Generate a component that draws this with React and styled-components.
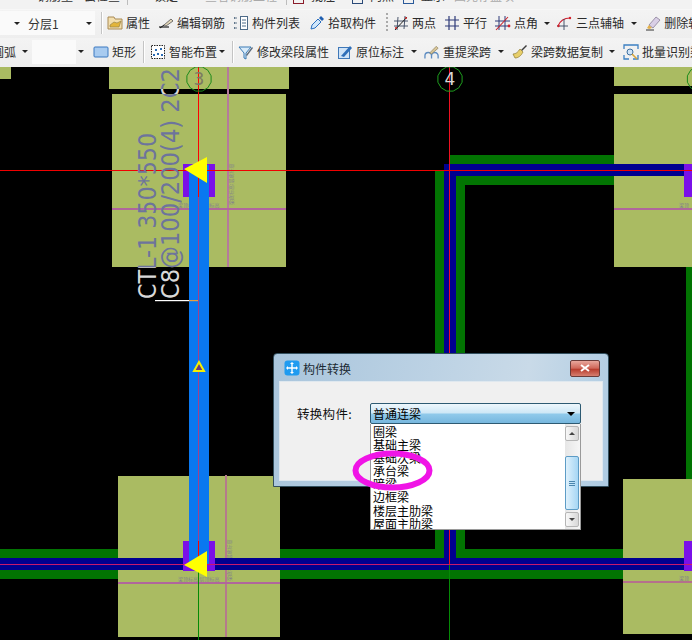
import React from 'react';
import styled, { createGlobalStyle } from 'styled-components';

const CJK = '"Noto Sans CJK SC", "Liberation Sans", sans-serif';

const Global = createGlobalStyle`
  html, body { margin: 0; padding: 0; background: #000; overflow: hidden; }
  body { font-family: ${CJK}; }
`;

const Page = styled.div`
  width: 692px;
  height: 640px;
  display: flex;
  flex-direction: column;
  overflow: hidden;
  background: #000;
`;

const Toolbars = styled.div`
  display: flex;
  flex-direction: column;
  height: 67px;
  flex: none;
  background: #f0f0f0;
`;

const CutRow = styled.div`
  height: 9px;
  display: flex;
  align-items: flex-start;
  overflow: hidden;
  background: #f2f2f2;
  border-bottom: 1px solid #f7f7f7;
`;

const CutLabel = styled.span`
  font-size: 12px;
  line-height: 12px;
  margin-top: -10px;
  margin-left: ${p => p.$ml}px;
  color: ${p => p.$c || '#333'};
  white-space: nowrap;
  flex: none;
`;

const CutIcon = styled.span`
  width: 11px;
  height: 4px;
  flex: none;
  margin-left: ${p => p.$ml}px;
  border: 1px solid ${p => p.$c};
  border-top: 0;
  box-sizing: border-box;
`;

const CutSep = styled.span`
  width: 1px;
  height: 5px;
  flex: none;
  margin-left: ${p => p.$ml}px;
  background: #bdbdbd;
`;

const Row = styled.div`
  height: ${p => p.$h}px;
  box-sizing: border-box;
  padding-bottom: 2px;
  display: flex;
  align-items: center;
  overflow: hidden;
  white-space: nowrap;
  background: linear-gradient(#f3f3f3, #eeeeee);
`;

const Combo = styled.div`
  height: 24px;
  width: ${p => p.$w}px;
  margin-left: ${p => p.$ml || 0}px;
  flex: none;
  display: flex;
  align-items: center;
  background: #fafafa;
  font-size: 12px;
  color: #333;
`;

const Caret = styled.span`
  flex: none;
  width: 0;
  height: 0;
  margin-left: ${p => p.$ml || 0}px;
  border-left: 3px solid transparent;
  border-right: 3px solid transparent;
  border-top: 3px solid #222;
`;

const ComboCaret = styled(Caret)`
  margin-left: auto;
  margin-right: 3px;
`;

const Sep = styled.span`
  flex: none;
  width: 1px;
  height: 22px;
  margin-left: ${p => p.$ml}px;
  margin-right: 1px;
  background: #c4c4c4;
  box-shadow: 1px 0 0 #fff;
`;

const DotSep = styled.span`
  flex: none;
  width: 2px;
  height: 20px;
  margin-left: ${p => p.$ml}px;
  background: repeating-linear-gradient(#aaa 0 2px, transparent 2px 4px);
`;

const Tool = styled.div`
  flex: none;
  display: flex;
  align-items: center;
  gap: 3px;
  margin-left: ${p => p.$ml}px;
  font-size: 12px;
  line-height: 16px;
  color: #2b2b2b;
`;

const PlainText = styled.span`
  flex: none;
  margin-left: ${p => p.$ml}px;
  font-size: 12px;
  color: #333;
`;

const Glyph = styled.svg`
  flex: none;
  width: 16px;
  height: 16px;
  display: block;
`;

const Canvas = styled.div`
  position: relative;
  flex: none;
  width: 692px;
  height: 573px;
  background: #000;
`;

const Drawing = styled.svg`
  display: block;
  width: 692px;
  height: 573px;
`;

const Dialog = styled.div`
  position: absolute;
  left: 273px;
  top: 286px;
  width: 336px;
  height: 134px;
  box-sizing: border-box;
  display: flex;
  flex-direction: column;
  padding: 0 6px 6px;
  border: 1px solid #33505f;
  border-radius: 4px 4px 0 0;
  background: linear-gradient(100deg, #a9c5dc 0%, #bcd2e4 45%, #c9dae8 72%, #aecbe2 100%);
`;

const TitleBar = styled.div`
  height: 28px;
  flex: none;
  display: flex;
  align-items: center;
  padding-left: 4px;
  gap: 3px;
  font-size: 12px;
  color: #1c2a33;
`;

const CloseButton = styled.div`
  width: 30px;
  height: 17px;
  margin-left: auto;
  margin-right: 2px;
  box-sizing: border-box;
  display: flex;
  align-items: center;
  justify-content: center;
  border: 1px solid #6b3c3a;
  border-radius: 2px;
  background: linear-gradient(#e8a79c 0%, #d0685a 48%, #b83d2e 55%, #d67f70 100%);
`;

const DialogBody = styled.div`
  flex: 1;
  background: #f0f0f0;
  padding: 21px 0 0 17px;
  box-shadow: 0 0 0 1px #dfe8ef;
`;

const FormRow = styled.div`
  display: flex;
  align-items: center;
`;

const FieldLabel = styled.div`
  width: 73px;
  flex: none;
  font-size: 12.5px;
  letter-spacing: 0.3px;
  color: #111;
`;

const SelectBox = styled.div`
  position: relative;
  width: 211px;
  height: 21px;
  box-sizing: border-box;
  display: flex;
  align-items: center;
  padding: 0 2px;
  border: 1px solid #2d5a72;
  border-radius: 2px;
  background: linear-gradient(#eef7fc 0%, #cfe8f6 45%, #8fc9ea 55%, #77b7de 100%);
  font-size: 12px;
  color: #000;
`;

const SelectCaret = styled(Caret)`
  margin-left: auto;
  margin-right: 3px;
  border-left-width: 4px;
  border-right-width: 4px;
  border-top-width: 4px;
  border-top-color: #000;
`;

const DropList = styled.div`
  position: absolute;
  left: -1px;
  top: 20px;
  width: 211px;
  height: 106px;
  box-sizing: border-box;
  display: flex;
  border: 1px solid #9a9a9a;
  border-top: 0;
  background: #fff;
`;

const Options = styled.div`
  flex: 1;
  overflow: hidden;
  padding: 1px 0 0 2px;
`;

const Option = styled.div`
  height: 13.1px;
  line-height: 13.1px;
  font-size: 12px;
  color: #000;
  white-space: nowrap;
`;

const ScrollBar = styled.div`
  width: 15px;
  flex: none;
  display: flex;
  flex-direction: column;
  padding: 2px 0;
  background: linear-gradient(90deg, #e6e6e6, #f6f6f6);
`;

const ScrollButton = styled.div`
  width: 14px;
  height: 15px;
  flex: none;
  box-sizing: border-box;
  display: flex;
  align-items: center;
  justify-content: center;
  border: 1px solid #b5b5b5;
  border-radius: 2px;
  background: linear-gradient(90deg, #f8f8f8, #d8d8d8);
`;

const ScrollArrow = styled.span`
  width: 0;
  height: 0;
  border-left: 3px solid transparent;
  border-right: 3px solid transparent;
  ${p => (p.$down ? 'border-top: 3px solid #444;' : 'border-bottom: 3px solid #444;')}
`;

const ScrollTrack = styled.div`
  flex: 1;
  display: flex;
  flex-direction: column;
  padding-top: 15px;
`;

const ScrollThumb = styled.div`
  width: 14px;
  height: 54px;
  box-sizing: border-box;
  display: flex;
  flex-direction: column;
  align-items: center;
  justify-content: center;
  gap: 1px;
  border: 1px solid #5d9cc6;
  border-radius: 2px;
  background: linear-gradient(90deg, #dff1fc, #a6d6f4);
`;

const Grip = styled.span`
  width: 6px;
  height: 1px;
  background: #4b86ad;
`;

const Annotation = styled.svg`
  position: absolute;
  left: 350px;
  top: 381px;
  width: 86px;
  height: 46px;
  pointer-events: none;
`;

/* ---------- toolbar icons ---------- */
const IconFolder = () => (
  <Glyph viewBox="0 0 16 16">
    <path d="M1 2h6l1 2h7v10H1z" fill="#f3dfae" stroke="#a98a55" />
    <path d="M3 10l4-3 3 1 4-2-2 6H3z" fill="#e3b53a" stroke="#8b7a4a" strokeWidth=".6" />
  </Glyph>
);
const IconRebar = () => (
  <Glyph viewBox="0 0 16 16">
    <path d="M1 12h10" stroke="#222" strokeWidth="1.2" />
    <path d="M6 10l7-6 2 2-7 5z" fill="#e3d6b8" stroke="#555" strokeWidth=".8" />
    <path d="M2 13l4-3" stroke="#111" />
  </Glyph>
);
const IconList = () => (
  <Glyph viewBox="0 0 16 16">
    <path d="M1 3h3M1 8h3M1 13h3" stroke="#35506b" strokeWidth="1.5" strokeDasharray="1.5 1" />
    <rect x="7.5" y="1.5" width="7" height="13" fill="#fff" stroke="#4d6a88" />
    <path d="M9 5h4M9 8h4M9 11h4" stroke="#4d6a88" />
  </Glyph>
);
const IconPicker = () => (
  <Glyph viewBox="0 0 16 16">
    <path d="M2 14l1-4 6-6 3 3-6 6z" fill="#cfe6fa" stroke="#2a6fc0" />
    <path d="M10 3l2-2 3 3-2 2z" fill="#1f5fb0" />
  </Glyph>
);
const IconTwoPoint = () => (
  <Glyph viewBox="0 0 16 16">
    <path d="M5 2l-1 13M12 1l-1 13M1 6h14M1 11h14" stroke="#39455e" strokeWidth=".9" fill="none" />
    <path d="M2 15L14 2" stroke="#222" />
    <circle cx="3" cy="13" r="1" fill="#c22" />
    <circle cx="13" cy="3" r="1" fill="#c22" />
  </Glyph>
);
const IconParallel = () => (
  <Glyph viewBox="0 0 16 16">
    <path d="M5 1v14M11 1v14M1 5h14M1 11h14" stroke="#2e3a78" strokeWidth="1.2" fill="none" />
  </Glyph>
);
const IconAngle = () => (
  <Glyph viewBox="0 0 16 16">
    <path d="M4 1v14M10 1v14M0 6h15M0 11h15" stroke="#2e3a78" strokeWidth="1" fill="none" />
    <path d="M1 15L13 2" stroke="#c8202a" strokeWidth="1.1" />
    <circle cx="14" cy="11" r="1.4" fill="#d2202a" />
  </Glyph>
);
const IconArc = () => (
  <Glyph viewBox="0 0 16 16">
    <path d="M1 11C3 6 7 3 13 3" stroke="#cc2030" strokeWidth="1.2" fill="none" />
    <path d="M7 4v11M0 11h11" stroke="#39455e" strokeWidth=".9" />
    <circle cx="13" cy="3" r="1.2" fill="#d2202a" />
    <circle cx="1.5" cy="11" r="1.2" fill="#d2202a" />
  </Glyph>
);
const IconErase = () => (
  <Glyph viewBox="0 0 16 16">
    <path d="M1 15h8" stroke="#333" />
    <path d="M4 10l7-8 4 3-7 8z" fill="#d9cfe6" stroke="#8a7f98" strokeWidth=".8" />
    <path d="M4 10l3 3-3 1-2-1z" fill="#e4b04a" />
  </Glyph>
);
const IconRect = () => (
  <Glyph viewBox="0 0 16 16">
    <rect x="1" y="3" width="14" height="10" rx="1" fill="#a8cbf0" stroke="#3a78c0" />
  </Glyph>
);
const IconLayout = () => (
  <Glyph viewBox="0 0 16 16">
    <rect x="1.5" y="1.5" width="13" height="13" fill="#fff" stroke="#222" strokeDasharray="1.5 1" />
    <path d="M5 5h2v2H5zM10 4h2v2h-2zM7 9h2v2H7zM11 10h2v2h-2zM3 10h2v2H3z" fill="#2b6cb5" />
  </Glyph>
);
const IconFunnel = () => (
  <Glyph viewBox="0 0 16 16">
    <path d="M1 3h12L8 9v6l-2-1V9z" fill="#d8ebfa" stroke="#3a7bb5" />
    <path d="M8 11l6-8 1 1-6 8z" fill="#5b6a7a" />
  </Glyph>
);
const IconMark = () => (
  <Glyph viewBox="0 0 16 16">
    <rect x="1.5" y="3.5" width="11" height="11" fill="#cfe3f7" stroke="#3f78b8" />
    <path d="M4 12l9-10 2 2-8 9z" fill="#2f6fb9" />
  </Glyph>
);
const IconSpan = () => (
  <Glyph viewBox="0 0 17 16">
    <path d="M1 15v-3a3 3 0 0 1 7 0v3M8 15v-3a3 3 0 0 1 7 0v3" stroke="#5d8cc2" strokeWidth="1.4" fill="none" />
    <path d="M6 9l7-7 2 2-7 6z" fill="#d9c79a" stroke="#8a7a55" strokeWidth=".7" />
  </Glyph>
);
const IconBrush = () => (
  <Glyph viewBox="0 0 16 16">
    <path d="M9 6l5-5 1 1-5 5z" fill="#3d3d3d" />
    <path d="M1 10c3 0 5-2 7-5l3 3c-2 4-5 6-8 6z" fill="#e8cf6a" stroke="#8c7a30" strokeWidth=".7" />
  </Glyph>
);
const IconBatch = () => (
  <Glyph viewBox="0 0 16 16">
    <path d="M1 5V1h14v4M1 11v4h5M15 11v4h-5" stroke="#3d80c2" strokeWidth="1.3" fill="none" />
    <circle cx="7" cy="8" r="3" fill="#cfe3f7" stroke="#3d6f9f" />
    <path d="M9 10l5 5" stroke="#d9a53a" strokeWidth="1.6" />
  </Glyph>
);

/* ---------- CAD drawing helpers ---------- */
const PADS = [
  [0, 67, 11, 12],
  [109, 67, 180, 22],
  [112, 94, 174, 173],
  [118, 476, 162, 161],
  [614, 67, 78, 19],
  [614, 94, 78, 173],
  [623, 479, 69, 155],
];

const PAD_COLOR = '#aabb62';
const PINK = '#b0669c';

const ring = (cx, cy, r) =>
  Array.from({ length: 12 }, (_, i) => {
    const a = (Math.PI / 6) * i + Math.PI / 12;
    return `${(cx + r * Math.cos(a)).toFixed(1)},${(cy + r * Math.sin(a)).toFixed(1)}`;
  }).join(' ');

const AxisLabel = styled.text`
  font-family: "DejaVu Sans", sans-serif;
  font-size: 17px;
  text-anchor: middle;
`;

const BeamNote = styled.text`
  font-family: "DejaVu Sans", sans-serif;
  font-size: 24px;
`;

const TinyNote = styled.text`
  font-family: ${CJK};
  font-size: 5px;
  fill: #83838a;
`;

const NoteLines = ({ fill, clip }) => (
  <g clipPath={clip}>
    <BeamNote x="155.5" y="299" fill={fill} textLength="166" lengthAdjust="spacingAndGlyphs" transform="rotate(-90 155.5 299)">CTL-1 350*550</BeamNote>
    <BeamNote x="179" y="299" fill={fill} textLength="231" lengthAdjust="spacingAndGlyphs" transform="rotate(-90 179 299)">C8@100/200(4) 2C2</BeamNote>
  </g>
);

const CadDrawing = () => (
  <Drawing viewBox="0 67 692 573">
    <defs>
      <clipPath id="onPad">
        {PADS.map(([x, y, w, h]) => <rect key={`${x}-${y}`} x={x} y={y} width={w} height={h} />)}
      </clipPath>
      <clipPath id="offPad">
        <rect x="100" y="89" width="100" height="5" />
        <rect x="100" y="267" width="100" height="60" />
      </clipPath>
    </defs>

    {/* green beam flanks */}
    <rect x="0" y="549" width="692" height="30" fill="#027402" />
    <rect x="450" y="155" width="180" height="30" fill="#027402" />
    <rect x="435" y="171" width="30" height="390" fill="#027402" />
    <rect x="686" y="267" width="6" height="212" fill="#027402" />

    {PADS.map(([x, y, w, h]) => <rect key={`${x}-${y}`} x={x} y={y} width={w} height={h} fill={PAD_COLOR} />)}

    {/* pink axes */}
    <rect x="227" y="67" width="2" height="200" fill="#b57a9c" />
    <rect x="112" y="208" width="174" height="2" fill={PINK} />
    <rect x="225" y="475" width="2" height="162" fill="#b57a8c" />
    <rect x="118" y="582" width="162" height="2" fill={PINK} />
    <rect x="614" y="208" width="78" height="2" fill={PINK} />
    <rect x="623" y="581" width="69" height="2" fill="#b5708c" />

    {/* tiny pad notes */}
    <TinyNote x="178" y="207">梁顶标高:层顶标高</TinyNote>
    <TinyNote x="233" y="205" transform="rotate(-90 233 205)">梁底标高:层底标高</TinyNote>
    <TinyNote x="178" y="581">梁顶标高:层顶标高</TinyNote>
    <TinyNote x="231" y="581" transform="rotate(-90 231 581)">梁底标高:层底标高</TinyNote>
    <TinyNote x="679" y="207">梁顶</TinyNote>
    <TinyNote x="679" y="580">梁顶</TinyNote>

    {/* blue beam core */}
    <rect x="0" y="558" width="692" height="12" fill="#000090" />
    <rect x="444" y="164" width="248" height="12" fill="#000090" />
    <rect x="444" y="164" width="12" height="394" fill="#000090" />

    {/* selected beam */}
    <rect x="183" y="164" width="32" height="33" fill="#7a10e8" />
    <rect x="183" y="541" width="32" height="30" fill="#7a10e8" />
    <rect x="684" y="164" width="8" height="33" fill="#7a10e8" />
    <rect x="684" y="541" width="8" height="30" fill="#7a10e8" />
    <rect x="189" y="165" width="20" height="400" fill="#0a78f0" />

    {/* axis lines */}
    <rect x="198" y="67" width="1" height="497" fill="#ff0000" />
    <rect x="198" y="197" width="1" height="344" fill="#a2408c" />
    <rect x="198" y="565" width="1" height="75" fill="#058a05" />
    <rect x="449" y="67" width="1" height="497" fill="#f01020" />
    <rect x="449" y="565" width="1" height="75" fill="#058a05" />
    <rect x="0" y="170" width="692" height="1" fill="#f00000" />
    <rect x="0" y="564" width="692" height="1" fill="#c8186c" />

    {/* grip triangles */}
    <polygon points="184,169 207,157 207,183" fill="#ffff00" />
    <polygon points="184,565 207,551 207,577" fill="#ffff00" />
    <polygon points="199,362 204,371 194,371" fill="#6a3a7a" stroke="#f4f000" strokeWidth="2" />

    {/* axis bubbles */}
    <polygon points={ring(199, 79, 12.5)} fill="none" stroke="#1a8a1a" />
    <polygon points={ring(450, 79, 12.5)} fill="none" stroke="#1fa01f" />
    <polygon points={ring(699.5, 79, 12.5)} fill="none" stroke="#1a8a1a" />
    <AxisLabel x="199" y="85" fill="#7c7a62">3</AxisLabel>
    <AxisLabel x="450" y="85" fill="#d8d8d8">4</AxisLabel>

    {/* rotated beam annotation: light on black, muted blue on the pads */}
    <NoteLines fill="#d8d8d8" clip="url(#offPad)" />
    <NoteLines fill="#6d749c" clip="url(#onPad)" />
    <rect x="155" y="300" width="34" height="1.2" fill="#fff" />
    <rect x="189" y="300" width="9" height="1.2" fill="#e8a040" />
  </Drawing>
);

const OPTIONS = ['圈梁', '基础主梁', '基础次梁', '承台梁', '暗梁', '边框梁', '楼层主肋梁', '屋面主肋梁'];

export default function App() {
  return (
    <Page>
      <Global />
      <Toolbars>
        <CutRow>
          <CutLabel $ml={37}>钢筋量</CutLabel>
          <CutLabel $ml={11}>云检查</CutLabel>
          <CutSep $ml={7} />
          <CutLabel $ml={26}>锁定</CutLabel>
          <CutLabel $ml={27} $c="#aaa">查看钢筋工程</CutLabel>
          <CutSep $ml={9} />
          <CutIcon $ml={6} $c="#8a1c2a" />
          <CutLabel $ml={7}>批注</CutLabel>
          <CutIcon $ml={17} $c="#2a4a78" />
          <CutLabel $ml={7}>两点</CutLabel>
          <CutIcon $ml={9} $c="#2a5a9a" />
          <CutLabel $ml={7}>显示</CutLabel>
          <CutLabel $ml={9} $c="#aaa">图元存盘项</CutLabel>
        </CutRow>

        <Row $h={28}>
          <Combo $w={95}>
            <Caret $ml={14} />
            <PlainText $ml={8}>分层1</PlainText>
            <ComboCaret />
          </Combo>
          <Sep $ml={6} />
          <Tool $ml={4}><IconFolder />属性</Tool>
          <Tool $ml={8}><IconRebar />编辑钢筋</Tool>
          <Tool $ml={8}><IconList />构件列表</Tool>
          <Tool $ml={9}><IconPicker />拾取构件</Tool>
          <DotSep $ml={10} />
          <Tool $ml={5}><IconTwoPoint />两点</Tool>
          <Tool $ml={8}><IconParallel />平行</Tool>
          <Tool $ml={8}><IconAngle />点角</Tool>
          <Caret $ml={6} />
          <Tool $ml={7}><IconArc />三点辅轴</Tool>
          <Caret $ml={7} />
          <Tool $ml={8}><IconErase />删除辅轴</Tool>
        </Row>

        <Row $h={29}>
          <PlainText $ml={-8}>圆弧</PlainText>
          <Caret $ml={6} />
          <Combo $w={44} $ml={4} />
          <Caret $ml={2} />
          <Tool $ml={9}><IconRect />矩形</Tool>
          <Sep $ml={7} />
          <Tool $ml={5}><IconLayout />智能布置</Tool>
          <Caret $ml={2} />
          <Sep $ml={7} />
          <Tool $ml={4}><IconFunnel />修改梁段属性</Tool>
          <Tool $ml={8}><IconMark />原位标注</Tool>
          <Caret $ml={7} />
          <Tool $ml={7}><IconSpan />重提梁跨</Tool>
          <Caret $ml={7} />
          <Tool $ml={8}><IconBrush />梁跨数据复制</Tool>
          <Caret $ml={6} />
          <Tool $ml={8}><IconBatch />批量识别梁支座</Tool>
        </Row>
      </Toolbars>

      <Canvas>
        <CadDrawing />

        <Dialog>
          <TitleBar>
            <Glyph viewBox="0 0 16 16">
              <rect x="0.5" y="0.5" width="15" height="15" rx="3" fill="#1f9bf0" />
              <path d="M8 3v10M3 8h10" stroke="#fff" strokeWidth="1.4" />
              <path d="M8 2l2 2H6zM8 14l2-2H6zM2 8l2-2v4zM14 8l-2-2v4z" fill="#fff" />
            </Glyph>
            构件转换
            <CloseButton>
              <svg width="10" height="8" viewBox="0 0 10 8">
                <path d="M1 1l8 6M9 1L1 7" stroke="#fff" strokeWidth="2" />
              </svg>
            </CloseButton>
          </TitleBar>
          <DialogBody>
            <FormRow>
              <FieldLabel>转换构件:</FieldLabel>
              <SelectBox>
                普通连梁
                <SelectCaret />
                <DropList>
                  <Options>
                    {OPTIONS.map(o => <Option key={o}>{o}</Option>)}
                  </Options>
                  <ScrollBar>
                    <ScrollButton><ScrollArrow /></ScrollButton>
                    <ScrollTrack>
                      <ScrollThumb><Grip /><Grip /><Grip /></ScrollThumb>
                    </ScrollTrack>
                    <ScrollButton><ScrollArrow $down /></ScrollButton>
                  </ScrollBar>
                </DropList>
              </SelectBox>
            </FormRow>
          </DialogBody>
        </Dialog>

        <Annotation viewBox="350 448 86 46">
          <ellipse cx="392.5" cy="470.5" rx="37" ry="17" fill="none" stroke="#f014e6" strokeWidth="6" />
        </Annotation>
      </Canvas>
    </Page>
  );
}
